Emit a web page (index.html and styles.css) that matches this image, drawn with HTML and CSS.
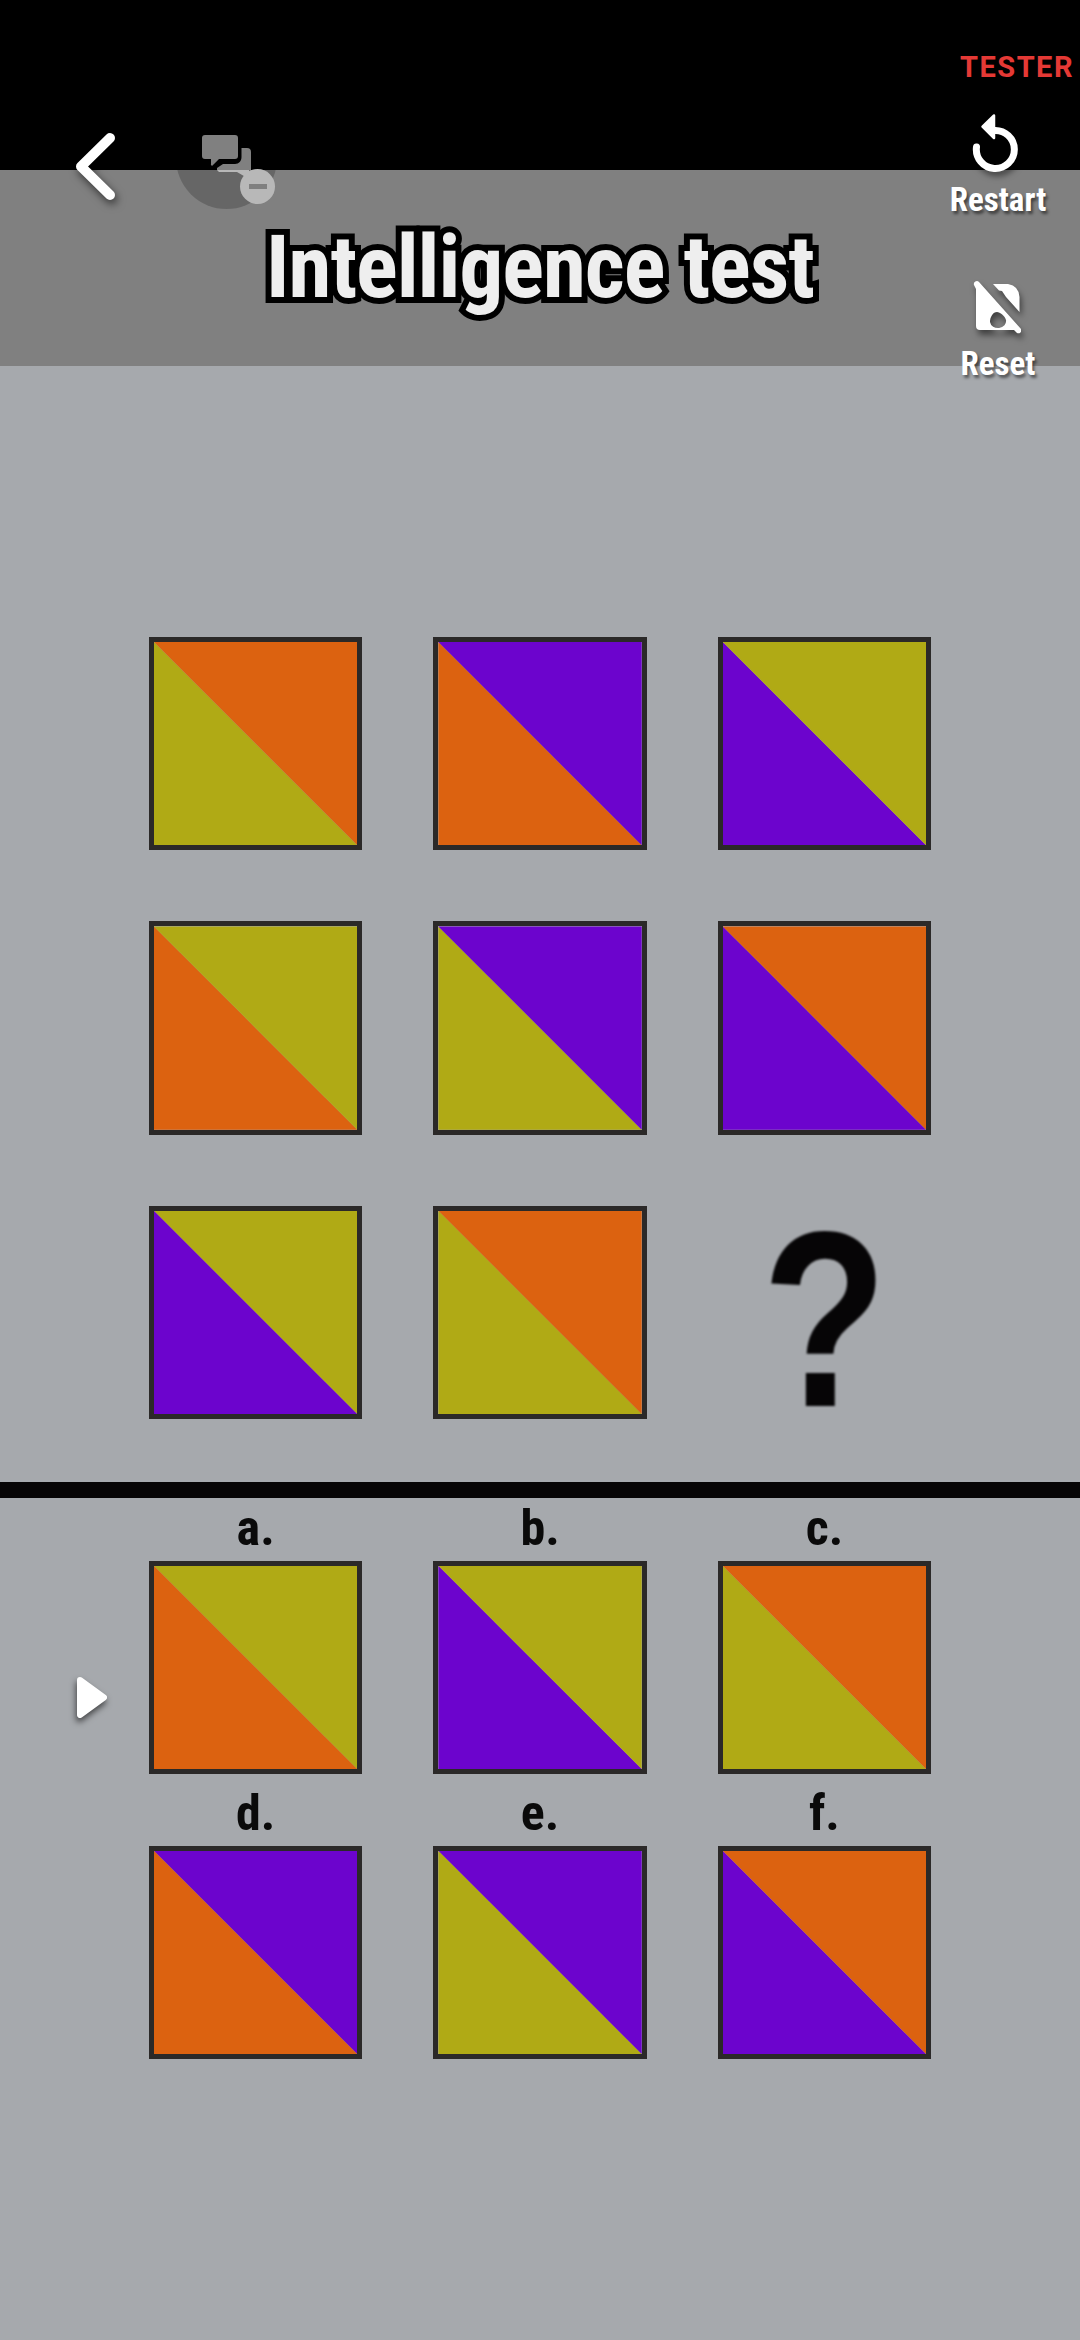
FILE: index.html
```html
<!DOCTYPE html>
<html lang="en">
<head>
  <meta charset="UTF-8">
  <meta name="viewport" content="width=device-width, initial-scale=1.0">
  <title>Intelligence test</title>
  <link rel="stylesheet" href="styles.css">
</head>
<body>
  <!-- Top area: black status strip and grey title band -->
  <div class="header">
    <div class="status-strip"></div>
    <div class="title-band">
      <h1 class="title">Intelligence test</h1>
    </div>

    <svg class="back-icon" viewBox="0 0 70 90">
      <path d="M50 18 L21 46.500 L50 75"></path>
    </svg>

    <div class="hint-disc"></div>
    <svg class="chat-icon" viewBox="0 0 60 55">
      <path class="chat-dark" d="M41.500 18h5.500a4 4 0 0 1 4 4v18H17v-2l6-4h12c4 0 6.500-3 6.500-7z"></path>
      <path class="chat-light" d="M17 40h32v9l-12-7H19z"></path>
      <path class="chat-dark" d="M5 5h30a3 3 0 0 1 3 3v18a3 3 0 0 1-3 3H19l-6 6a1 1 0 0 1-2-1v-5H5a3 3 0 0 1-3-3V8a3 3 0 0 1 3-3z"></path>
    </svg>
    <div class="hint-minus"><span></span></div>

    <div class="tester">TESTER</div>

    <div class="actions">
      <div class="action">
        <svg class="restart-icon" viewBox="0 0 48 60">
          <path class="restart-ring" d="M22 17.500a19 19 0 1 1-17.500 16.500"></path>
          <path class="restart-arrow" d="M22 2.500L10.500 13.700 22 25z"></path>
        </svg>
        <span class="action-label">Restart</span>
      </div>
      <div class="action action-reset">
        <svg class="reset-icon" viewBox="0 0 48 54">
          <path d="M20 4H35Q46 6 46.500 17V32L33 17 29 11 26 10.500z"></path>
          <path fill-rule="evenodd" d="M3 9V46a4 4 0 0 0 4 4H41L44 53a3 3 0 0 0 4-4L6 2a3 3 0 0 0-5 3zM24 32c3 0 8 4 9 8a8 7 0 1 1-16 2c0-5 3-10 7-10z"></path>
        </svg>
        <span class="action-label">Reset</span>
      </div>
    </div>
  </div>

  <!-- Question matrix -->
  <div class="matrix">
    <div class="tile"><div class="lower olive"></div><div class="upper orange"></div></div>
    <div class="tile"><div class="lower orange"></div><div class="upper purple"></div></div>
    <div class="tile"><div class="lower purple"></div><div class="upper olive"></div></div>
    <div class="tile"><div class="lower orange"></div><div class="upper olive"></div></div>
    <div class="tile"><div class="lower olive"></div><div class="upper purple"></div></div>
    <div class="tile"><div class="lower purple"></div><div class="upper orange"></div></div>
    <div class="tile"><div class="lower purple"></div><div class="upper olive"></div></div>
    <div class="tile"><div class="lower olive"></div><div class="upper orange"></div></div>
    <div class="unknown">?</div>
  </div>

  <div class="divider"></div>

  <!-- Answers -->
  <div class="answers-wrap">
    <svg class="pointer" viewBox="0 0 38 48">
      <path d="M7 7 L31 24.500 L7 42 Z"></path>
    </svg>
    <div class="answers">
      <div class="answer"><div class="answer-label">a.</div><div class="tile"><div class="lower orange"></div><div class="upper olive"></div></div></div>
      <div class="answer"><div class="answer-label">b.</div><div class="tile"><div class="lower purple"></div><div class="upper olive"></div></div></div>
      <div class="answer"><div class="answer-label">c.</div><div class="tile"><div class="lower olive"></div><div class="upper orange"></div></div></div>
      <div class="answer"><div class="answer-label">d.</div><div class="tile"><div class="lower orange"></div><div class="upper purple"></div></div></div>
      <div class="answer"><div class="answer-label">e.</div><div class="tile"><div class="lower olive"></div><div class="upper purple"></div></div></div>
      <div class="answer"><div class="answer-label">f.</div><div class="tile"><div class="lower purple"></div><div class="upper orange"></div></div></div>
    </div>
  </div>
</body>
</html>
```

FILE: styles.css
```css
* {
  box-sizing: border-box;
}

html, body {
  margin: 0;
  padding: 0;
}

body {
  width: 1080px;
  height: 2340px;
  overflow: hidden;
  background-color: #a6a9ad;
  font-family: Roboto, "Liberation Sans", sans-serif;
}

.header {
  position: relative;
  height: 366px;
}

.status-strip {
  height: 170px;
  background-color: #000;
}

.title-band {
  height: 196px;
  background-color: #808080;
  display: flex;
  justify-content: center;
}

.title {
  margin: 47px 0 0;
  font-size: 87px;
  line-height: 100px;
  font-weight: 700;
  font-stretch: condensed;
  letter-spacing: -1px;
  color: #eee;
  white-space: nowrap;
  -webkit-text-stroke: 12px #000;
  paint-order: stroke fill;
  text-shadow: 2px 0 0 #000, -2px 0 0 #000, 0 5px 0 #000, 2px 5px 0 #000, -2px 5px 0 #000;
}

.back-icon {
  position: absolute;
  left: 60px;
  top: 120px;
  width: 70px;
  height: 90px;
  filter: drop-shadow(2px 4px 4px rgba(0, 0, 0, 0.6));
}

.back-icon path {
  fill: none;
  stroke: #fff;
  stroke-width: 10;
  stroke-linecap: round;
  stroke-linejoin: round;
}

.hint-disc {
  position: absolute;
  left: 176px;
  top: 108px;
  width: 101px;
  height: 101px;
  border-radius: 50%;
  background-color: rgba(0, 0, 0, 0.2);
}

.chat-icon {
  position: absolute;
  left: 200px;
  top: 130px;
  width: 60px;
  height: 55px;
}

.chat-dark {
  fill: #808080;
}

.chat-light {
  fill: #b8b8b8;
}

.hint-minus {
  position: absolute;
  left: 240px;
  top: 169px;
  width: 35px;
  height: 35px;
  border-radius: 50%;
  background-color: #b8b8b8;
  display: flex;
  align-items: center;
  justify-content: center;
}

.hint-minus span {
  width: 18px;
  height: 5px;
  background-color: #808080;
}

.tester {
  position: absolute;
  right: 6px;
  top: 50px;
  font-size: 29px;
  line-height: 34px;
  font-weight: 700;
  letter-spacing: 1.5px;
  color: #e53935;
}

.actions {
  position: absolute;
  right: 27px;
  top: 113px;
  width: 110px;
  display: flex;
  flex-direction: column;
  align-items: center;
}

.action {
  display: flex;
  flex-direction: column;
  align-items: center;
}

.action-reset {
  margin-top: 62px;
}

.restart-icon {
  width: 48px;
  height: 60px;
  margin-right: 5px;
  margin-bottom: 9px;
  filter: drop-shadow(2px 4px 3px rgba(0, 0, 0, 0.5));
}

.restart-ring {
  fill: none;
  stroke: #fff;
  stroke-width: 7;
  stroke-linecap: round;
}

.restart-arrow {
  fill: #fff;
  stroke: #fff;
  stroke-width: 2.5;
  stroke-linejoin: round;
}

.reset-icon {
  width: 48px;
  height: 54px;
  margin-right: 2px;
  margin-bottom: 12px;
  fill: #fff;
  filter: drop-shadow(2px 5px 3px rgba(0, 0, 0, 0.5));
}

.action-label {
  font-size: 33px;
  line-height: 36px;
  font-weight: 700;
  font-stretch: condensed;
  color: #fff;
  text-shadow: 2px 3px 3px rgba(0, 0, 0, 0.5);
}

.matrix {
  margin-top: 271px;
  margin-left: 149px;
  display: grid;
  grid-template-columns: repeat(3, 213.3px);
  grid-auto-rows: 213.3px;
  column-gap: 71.1px;
  row-gap: 71.1px;
}

.tile {
  position: relative;
  width: 213.3px;
  height: 213.3px;
  border: 5px solid #2b2928;
}

.lower, .upper {
  position: absolute;
  inset: 0;
}

.lower {
  clip-path: polygon(0 0, 100% 100%, 0 100%);
}

.upper {
  clip-path: polygon(0 0, 100% 0, 100% 100%);
}

.orange {
  background-color: #dc6210;
}

.olive {
  background-color: #b0aa15;
}

.purple {
  background-color: #6c04cd;
}

.unknown {
  display: flex;
  align-items: center;
  justify-content: center;
  padding-top: 14px;
  font-family: "Liberation Sans", sans-serif;
  font-size: 250px;
  line-height: 213px;
  font-weight: 700;
  color: #060506;
  transform: scaleX(0.82);
  filter: blur(1px);
}

.divider {
  height: 16px;
  margin-top: 63px;
  background-color: #060405;
}

.answers-wrap {
  position: relative;
}

.pointer {
  position: absolute;
  left: 73px;
  top: 175px;
  width: 38px;
  height: 48px;
  filter: drop-shadow(-1px 4px 3px rgba(0, 0, 0, 0.6));
}

.pointer path {
  fill: #fff;
  stroke: #fff;
  stroke-width: 6;
  stroke-linejoin: round;
}

.answers {
  margin-left: 149px;
  display: grid;
  grid-template-columns: repeat(3, 213.3px);
  column-gap: 71.1px;
  row-gap: 9px;
}

.answer-label {
  height: 62.7px;
  font-size: 50px;
  line-height: 60px;
  font-weight: 700;
  font-stretch: condensed;
  text-align: center;
  color: #0a0a0a;
}
```
